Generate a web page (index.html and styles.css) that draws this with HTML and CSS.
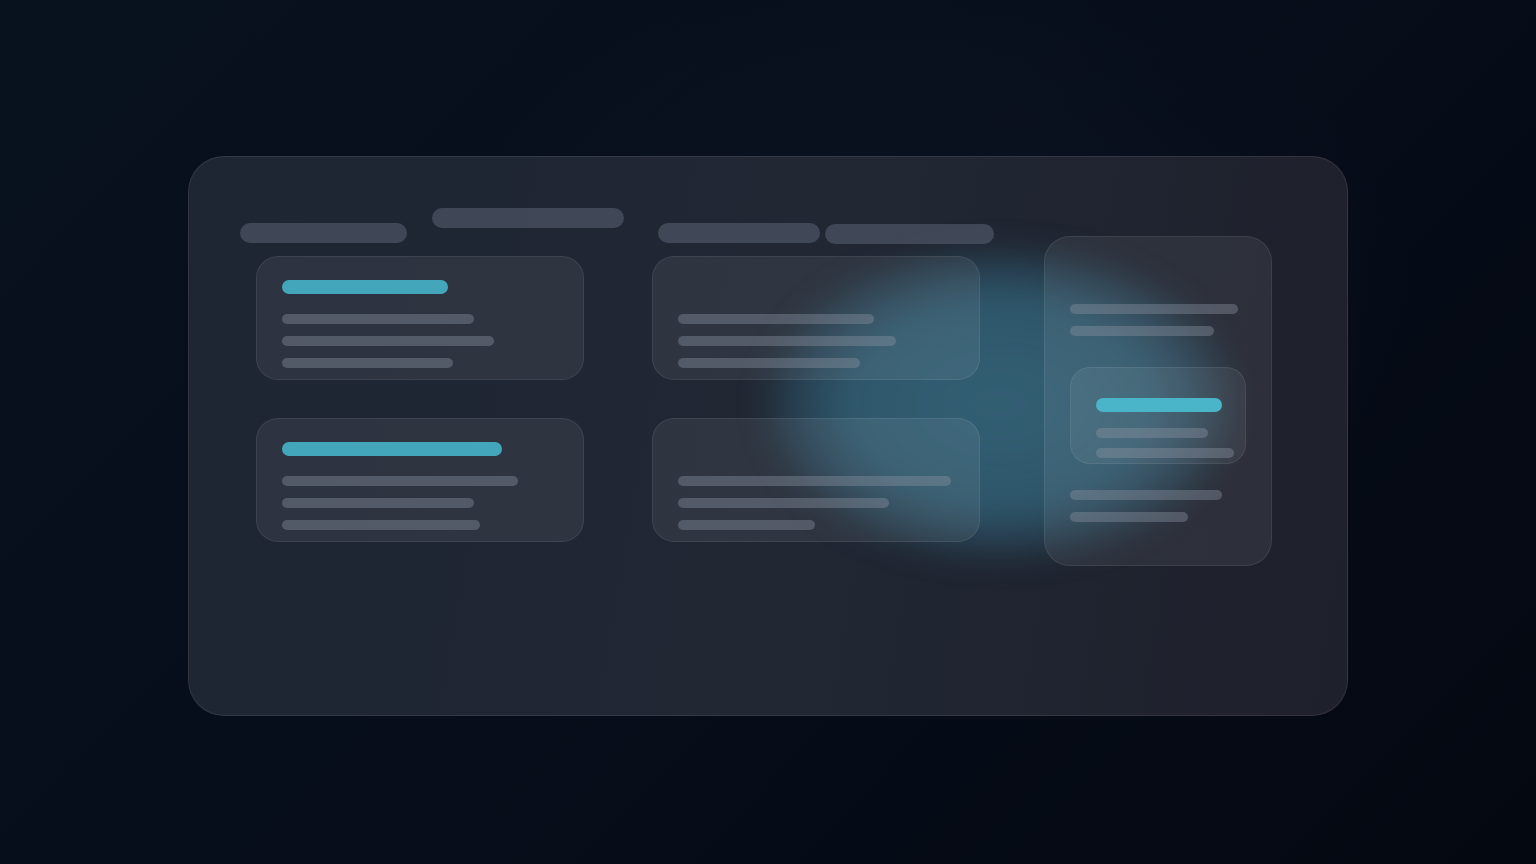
FILE: index.html
```html
<!DOCTYPE html>
<html lang="en">
<head>
<meta charset="utf-8">
<title>Skeleton dashboard</title>
<link rel="stylesheet" href="styles.css">
</head>
<body>
<main class="panel">
  <div class="glow"></div>
  <section class="col col-1">
    <div class="head head-1">
      <span class="pill pill-a"></span>
      <span class="pill pill-b"></span>
    </div>
    <div class="stack">
      <article class="card">
        <span class="accent" style="width:166px"></span>
        <span class="line first" style="width:192px"></span>
        <span class="line" style="width:212px"></span>
        <span class="line" style="width:171px"></span>
      </article>
      <article class="card">
        <span class="accent" style="width:220px"></span>
        <span class="line first" style="width:236px"></span>
        <span class="line" style="width:192px"></span>
        <span class="line" style="width:198px"></span>
      </article>
    </div>
  </section>
  <section class="col col-2">
    <div class="head head-2">
      <span class="pill pill-c"></span>
      <span class="pill pill-d"></span>
    </div>
    <div class="stack">
      <article class="card">
        <span class="accent ghost"></span>
        <span class="line first" style="width:196px"></span>
        <span class="line" style="width:218px"></span>
        <span class="line" style="width:182px"></span>
      </article>
      <article class="card">
        <span class="accent ghost"></span>
        <span class="line first" style="width:273px"></span>
        <span class="line" style="width:211px"></span>
        <span class="line" style="width:137px"></span>
      </article>
    </div>
  </section>
  <section class="col col-3">
    <article class="side">
      <span class="line" style="width:168px"></span>
      <span class="line" style="width:144px"></span>
      <div class="inner">
        <span class="accent bright" style="width:126px"></span>
        <span class="line in-first" style="width:112px"></span>
        <span class="line in-second" style="width:138px"></span>
      </div>
      <span class="line after" style="width:152px"></span>
      <span class="line" style="width:118px"></span>
    </article>
  </section>
</main>
</body>
</html>
```
FILE: styles.css
```css
* { box-sizing: border-box; }
html, body { margin: 0; height: 100%; }
body {
  width: 1536px;
  height: 864px;
  overflow: hidden;
  font-family: "Inter", "Liberation Sans", sans-serif;
  background:
    radial-gradient(ellipse 700px 500px at 60% 35%, rgba(20, 30, 50, 0.35), rgba(0,0,0,0) 70%),
    linear-gradient(135deg, #08111e 0%, #070e1b 45%, #040811 100%);
  padding-top: 156px;
}
.panel {
  position: relative;
  width: 1160px;
  height: 560px;
  margin: 0 auto;
  border-radius: 36px;
  border: 1px solid rgba(255, 255, 255, 0.09);
  background: linear-gradient(100deg, #1e2533 0%, #212834 50%, #1e202b 100%);
  padding: 51px 0 0 51px;
  display: flex;
  align-items: flex-start;
  overflow: hidden;
}
.glow {
  position: absolute;
  left: 572px;
  top: 88px;
  width: 478px;
  height: 318px;
  border-radius: 50%;
  background: radial-gradient(ellipse at 50% 50%, rgba(56, 112, 135, 0.78) 0%, rgba(54, 108, 132, 0.7) 45%, rgba(48, 96, 120, 0.4) 62%, rgba(40, 80, 100, 0) 72%);
  filter: blur(14px);
  z-index: 0;
}
.col { position: relative; z-index: 1; display: flex; flex-direction: column; }
.col-1 { width: 384px; }
.col-2 { width: 342px; margin-left: 28px; padding-top: 15px; }
.col-3 { width: 228px; margin-left: 50px; padding-top: 28px; }

.head { display: flex; align-items: flex-start; }
.pill {
  display: block;
  flex-shrink: 0;
  height: 20px;
  border-radius: 10px;
  background: rgba(96, 104, 122, 0.5);
}
.pill-a { width: 167px; margin-top: 15px; }
.pill-b { width: 192px; margin-left: 25px; }
.pill-c { width: 162px; margin-left: 6px; }
.pill-d { width: 169px; margin-left: 5px; margin-top: 1px; }

.stack { display: flex; flex-direction: column; gap: 38px; }
.col-1 .stack { margin: 13px 0 0 16px; }
.col-2 .stack { margin-top: 12px; }

.card {
  width: 328px;
  height: 124px;
  border-radius: 22px;
  border: 1px solid rgba(255, 255, 255, 0.08);
  background: rgba(255, 255, 255, 0.065);
  padding: 23px 25px 0;
  display: flex;
  flex-direction: column;
  align-items: flex-start;
}
.accent {
  display: block;
  flex-shrink: 0;
  height: 14px;
  border-radius: 7px;
  background: #44a6ba;
}
.accent.ghost { background: transparent; width: 10px; }
.accent.bright { background: #4ab5c8; }
.line {
  display: block;
  flex-shrink: 0;
  height: 10px;
  border-radius: 5px;
  background: rgba(140, 148, 162, 0.4);
  margin-top: 12px;
}
.line.first { margin-top: 20px; }

.side {
  width: 228px;
  height: 330px;
  border-radius: 26px;
  border: 1px solid rgba(255, 255, 255, 0.08);
  background: rgba(255, 255, 255, 0.065);
  padding: 67px 25px 0;
  display: flex;
  flex-direction: column;
  align-items: flex-start;
}
.side > .line:first-child { margin-top: 0; }
.inner {
  flex-shrink: 0;
  width: 176px;
  height: 97px;
  margin-top: 31px;
  border-radius: 20px;
  border: 1px solid rgba(255, 255, 255, 0.08);
  background: rgba(255, 255, 255, 0.06);
  padding: 30px 25px 0;
  display: flex;
  flex-direction: column;
  align-items: flex-start;
}
.line.in-first { margin-top: 16px; }
.line.in-second { margin-top: 10px; }
.line.after { margin-top: 26px; }
```
